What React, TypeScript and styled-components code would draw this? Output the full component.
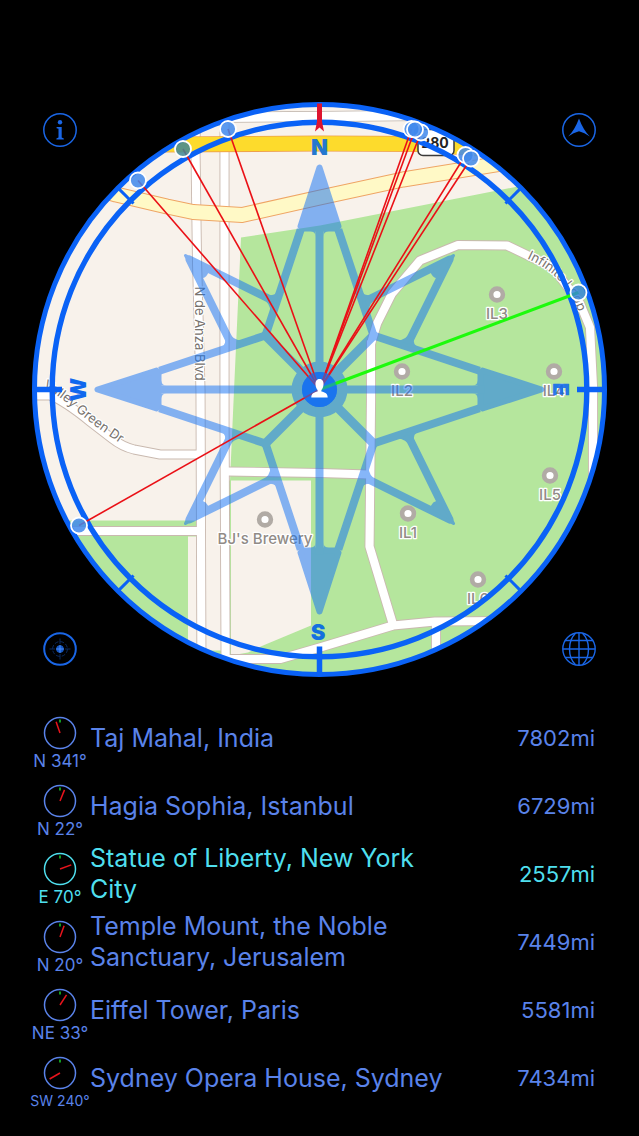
import React from "react";
import styled, { createGlobalStyle } from "styled-components";

const RING = "#0a62f6";
const ICON = "#1a66e6";

const GlobalStyle = createGlobalStyle`
  body {
    margin: 0;
    background: #000;
    font-family: Inter, "Liberation Sans", sans-serif;
  }
`;

const Page = styled.main`
  display: flex;
  flex-direction: column;
  gap: 27px;
  min-height: 100vh;
  box-sizing: border-box;
  padding: 102px 32px 16px;
  background: #000;
`;

const DialArea = styled.section`
  display: grid;
  grid-template-columns: 1fr 1fr;
  grid-template-rows: 1fr 1fr;
`;

const Dial = styled.svg`
  grid-area: 1 / 1 / 3 / 3;
  display: block;
  width: 100%;
  height: auto;
`;

const CornerButton = styled.button<{ $row: number; $col: number }>`
  grid-area: ${(p) => p.$row} / ${(p) => p.$col};
  justify-self: ${(p) => (p.$col === 1 ? "start" : "end")};
  align-self: ${(p) => (p.$row === 1 ? "start" : "end")};
  z-index: 1;
  width: 34px;
  height: 34px;
  margin: 11px;
  padding: 0;
  border: 0;
  background: none;
  color: ${ICON};
  cursor: pointer;

  svg {
    display: block;
  }
`;

const List = styled.ul`
  margin: 0;
  padding: 0;
  list-style: none;
`;

const RowButton = styled.button<{ $active?: boolean }>`
  display: grid;
  grid-template-columns: 56px minmax(0, 1fr) 136px;
  column-gap: 2px;
  align-items: center;
  width: 100%;
  height: 68px;
  padding: 0 12px 0 0;
  border: 0;
  background: none;
  color: ${(p) => (p.$active ? "#4fdfee" : "#5a83ea")};
  font-family: inherit;
  text-align: left;
  cursor: pointer;
`;

const Bearing = styled.span`
  display: flex;
  flex-direction: column;
  align-items: center;
  padding: 11px 3px 0 0;
  margin-right: -3px;
`;

const BearingText = styled.span<{ $small?: boolean }>`
  font-size: ${(p) => (p.$small ? 14 : 17)}px;
  line-height: 22px;
  white-space: nowrap;
`;

const Name = styled.span`
  font-size: 25px;
  line-height: 31px;
`;

const Distance = styled.span`
  font-size: 22px;
  line-height: 31px;
  text-align: right;
`;

type Place = { name: string; dir: string; deg: number; miles: number; active?: boolean };

const places: Place[] = [
  { name: "Taj Mahal, India", dir: "N", deg: 341, miles: 7802 },
  { name: "Hagia Sophia, Istanbul", dir: "N", deg: 22, miles: 6729 },
  { name: "Statue of Liberty, New York City", dir: "E", deg: 70, miles: 2557, active: true },
  { name: "Temple Mount, the Noble Sanctuary, Jerusalem", dir: "N", deg: 20, miles: 7449 },
  { name: "Eiffel Tower, Paris", dir: "NE", deg: 33, miles: 5581 },
  { name: "Sydney Opera House, Sydney", dir: "SW", deg: 240, miles: 7434 },
];

const MiniCompass = ({ deg }: { deg: number }) => (
  <svg width="34" height="34" viewBox="-17 -17 34 34" aria-hidden="true">
    <circle r="15.5" fill="none" stroke="currentColor" strokeWidth="1.5" />
    <path d="M0 -13.5V-10.5" stroke="#16c426" strokeWidth="1.6" />
    <path d="M0 0V-12" stroke="#e8141c" strokeWidth="1.5" transform={`rotate(${deg})`} />
  </svg>
);

const InfoIcon = () => (
  <svg width="34" height="34" viewBox="0 0 34 34" aria-hidden="true">
    <circle cx="17" cy="17" r="16.2" fill="none" stroke="currentColor" strokeWidth="1.5" />
    <circle cx="17" cy="9.3" r="2.2" fill="currentColor" />
    <path d="M13.6 14H18.7V24.6L20.8 25.4V26.6H13.4V25.4L15.5 24.6V15.8L13.6 15.2Z" fill="currentColor" />
  </svg>
);

const NorthIcon = () => (
  <svg width="34" height="34" viewBox="0 0 34 34" aria-hidden="true">
    <circle cx="17" cy="17" r="16.2" fill="none" stroke="currentColor" strokeWidth="1.5" />
    <path d="M17 5.5Q21 16.5 27.8 23.6Q22.5 19.4 17 18.2Q11.5 19.4 6.2 23.6Q13 16.5 17 5.5Z" fill="currentColor" />
  </svg>
);

const TargetIcon = () => (
  <svg width="34" height="34" viewBox="0 0 34 34" aria-hidden="true">
    <circle cx="17" cy="17" r="15.8" fill="none" stroke="currentColor" strokeWidth="2" />
    <g fill="none" stroke="currentColor" opacity="0.4">
      <circle cx="17" cy="17" r="7.4" strokeDasharray="4 1.8" />
      <path d="M17 6.5V12M17 22V27.5M6.5 17H12M22 17H27.5" />
    </g>
    <circle cx="17" cy="17" r="3.8" fill="currentColor" opacity="0.85" />
    <path d="M17 13V21M13 17H21" stroke="#4a8df8" strokeWidth="1" />
  </svg>
);

const GlobeIcon = () => (
  <svg width="34" height="34" viewBox="0 0 34 34" fill="none" stroke="currentColor" strokeWidth="1.4" aria-hidden="true">
    <circle cx="17" cy="17" r="16.2" />
    <path d="M17 1V33M1 17H33M3.3 8.5H30.7M3.3 25.5H30.7" />
    <path d="M13.5 1.2C5.5 9 5.5 25 13.5 32.8M20.5 1.2C28.5 9 28.5 25 20.5 32.8" />
  </svg>
);

const roads = [
  "M196 100L195.5 150L197 260L200.5 390L201.5 680",
  "M224.5 100V420L225.7 680",
  "M371 343L377 323L392 293L420 260L458 244.5L507 245L553 267L580 303L590 327L593 387V480",
  "M371 340V400L369.5 546L393 624",
  "M222 658.5H280L320 647L393 625L435 621L500 620.5",
  "M436 621V660",
  "M228 471L320 472.5L369 474",
  "M60 530.5H200",
  "M30 395H50Q64 400 90 421L112 438Q122 446 134 449L160 454H199",
];

const pins = [
  { x: 497, y: 294, label: "IL3" },
  { x: 402, y: 371, label: "IL2" },
  { x: 554, y: 371, label: "IL4" },
  { x: 550, y: 475, label: "IL5" },
  { x: 408, y: 513, label: "IL1" },
  { x: 478, y: 579, label: "IL6" },
  { x: 265, y: 519, label: "BJ's Brewery" },
];

const targets = [
  { x: 228, y: 128.5 },
  { x: 183, y: 148.5, fill: "#3f8795" },
  { x: 138, y: 180 },
  { x: 79, y: 525 },
  { x: 421, y: 132 },
  { x: 411.5, y: 128.5 },
  { x: 415, y: 129 },
  { x: 465.5, y: 154.5 },
  { x: 471, y: 158 },
];

const halo = { stroke: "#fff", strokeWidth: 2.5, strokeLinejoin: "round" as const, paintOrder: "stroke" };

const MapLayer = () => (
  <g clipPath="url(#dial-clip)">
    <rect x="30" y="100" width="580" height="580" fill="#f8f2eb" />
    <g fill="#b5e69d">
      <path d="M241 237L320 225L513 187L620 165V680H222V480H230L234 390Z" />
      <path d="M60 520H197V536H188V680H60Z" />
      <path d="M206 650H221V680H206Z" />
    </g>
    <path d="M231 480H311V625L263 645L248 652L231 655Z" fill="#f8f2eb" />
    <rect x="206" y="240" width="15" height="408" fill="#f8f2eb" />

    <g fill="none" strokeLinejoin="round">
      <path d="M190 117L320 116L420 115" stroke="#bdb2a9" strokeWidth="11" />
      <path d="M190 117L320 116L420 115" stroke="#fff" strokeWidth="9.4" />
      {roads.map((d) => (
        <path key={d} d={d} stroke="#c9b9af" strokeWidth="10" />
      ))}
      {roads.map((d) => (
        <path key={d} d={d} stroke="#fff" strokeWidth="8.2" />
      ))}
      <path d="M90 186L116 194L167 206L193 211.5L242 214.5L320 197L403 179L520 160" stroke="#efa565" strokeWidth="16" />
      <path d="M90 186L116 194L167 206L193 211.5L242 214.5L320 197L403 179L520 160" stroke="#fff9c6" strokeWidth="14" />
      <path d="M160 144L320 143L420 143.5L480 148" stroke="#eda04c" strokeWidth="16" />
      <path d="M160 144L320 143L420 143.5L480 148" stroke="#fddb2c" strokeWidth="14.4" />
    </g>

    <rect x="418" y="129" width="36" height="26" rx="5" fill="#fff" stroke="#3a3a3a" strokeWidth="1.5" />
    <text x="435" y="147" textAnchor="middle" fontSize="14" fontWeight="700" fill="#222">280</text>

    <g fontSize="13" fill="#77726d" {...halo}>
      <text transform="translate(195 286) rotate(90)">N de Anza Blvd</text>
      <path id="valley-path" d="M43 387Q58 394 72 407Q96 428 136 453" fill="none" stroke="none" />
      <text><textPath href="#valley-path">Valley Green Dr</textPath></text>
      <path id="loop-path" d="M527 258Q562 274 575 303L588 337" fill="none" stroke="none" />
      <text><textPath href="#loop-path">Infinite Loop</textPath></text>
    </g>
    {pins.map((p) => (
      <circle key={p.label} cx={p.x} cy={p.y} r="5.9" fill="#fff" stroke="#b1aba5" strokeWidth="4.6" />
    ))}
  </g>
);

const PinLabels = () => (
  <g clipPath="url(#inner-clip)" fontSize="15" fontWeight="500" fill="#918b86" textAnchor="middle" {...halo}>
    {pins.map((p) => (
      <text key={p.label} x={p.x} y={p.y + 24}>{p.label}</text>
    ))}
  </g>
);

const Rose = () => (
  <g transform="translate(319.5 389)" opacity="0.5" fill="#0f70f5" stroke="#0f70f5">
    <circle r="28" stroke="none" />
    {[0, 90, 180, 270].map((a) => (
      <g key={a} transform={`rotate(${a})`}>
        <path d="M0 -222L-19 -163L-17 -161H17L19 -163Z" strokeWidth="6" strokeLinejoin="round" />
        <path d="M-18.8 -160L-54 -54M18.8 -160L54 -54" fill="none" strokeWidth="8" />
        <path d="M0 0V-165" fill="none" strokeWidth="8" />
        <path d="M-4 -159V-153Q-4 -158 -9 -158ZM4 -159V-153Q4 -158 9 -158Z" stroke="none" />
        <path d="M0 0L-54 -54" fill="none" strokeWidth="9" strokeLinecap="round" />
        <path d="M-45 -88L-130 -130L-88 -45" fill="none" strokeWidth="8" strokeLinejoin="round" />
        <path d="M-134 -134L-112 -122Q-112 -112 -122 -112Z" strokeWidth="3" strokeLinejoin="round" />
        <path
          d="M-49 -77Q-49 -87 -58 -91L-45 -92ZM-77 -49Q-87 -49 -91 -58L-92 -45ZM-41 -101Q-44 -92 -53 -95L-43 -86ZM-101 -41Q-92 -44 -95 -53L-86 -43Z"
          stroke="none"
        />
      </g>
    ))}
  </g>
);

const CompassDial = () => (
  <Dial viewBox="32 101.5 575 575" role="img" aria-label="Compass map">
    <defs>
      <clipPath id="dial-clip"><circle cx="319.5" cy="389" r="286" /></clipPath>
      <clipPath id="inner-clip"><circle cx="319.5" cy="389" r="266" /></clipPath>
    </defs>
    <MapLayer />
    <PinLabels />
    <Rose />
    <g fontSize="22" fontWeight="900" textAnchor="middle">
      <text x="319.5" y="154" fill="#2477cf">N</text>
      <text x="318" y="639" fill="#1370e0">S</text>
      <text x="78" y="389" dy="8" fill="#1068ee" transform="rotate(-90 78 389)">W</text>
      <text x="560.5" y="389" dy="8" fill="#1068ee" fillOpacity="0.9" transform="rotate(90 560.5 389)">E</text>
    </g>

    <g fill="none" stroke={RING}>
      <circle cx="319.5" cy="389" r="285" strokeWidth="5" />
      <circle cx="319.5" cy="389" r="267.3" strokeWidth="5.4" />
      <path d="M34 389H62M577 389H606M319.5 646V675" strokeWidth="5.5" />
      {[45, 135, 225, 315].map((a) => (
        <path key={a} d="M319.5 105V126" strokeWidth="3" transform={`rotate(${a} 319.5 389)`} />
      ))}
    </g>
    <path d="M317 103H322V121L324 131L319.5 127L315 131L317 121Z" fill="#dd1430" />

    <circle cx="319.5" cy="389" r="17.5" fill="#1a74ee" />
    <g stroke="#ea1016" strokeWidth="1.6">
      {targets.map((t) => (
        <line key={`${t.x}`} x1="319.5" y1="389" x2={t.x} y2={t.y} />
      ))}
    </g>
    <line x1="319.5" y1="389" x2="578.5" y2="292" stroke="#1dfa0c" strokeWidth="3" />
    <circle cx="319.5" cy="389" r="17.5" fill="#1a74ee" opacity="0.6" />
    <path d="M319.5 378.5C316.5 378.5 315.2 381 315.5 384C315.7 387 316.8 388.5 317.6 389.5V391C314 391.8 311.3 393 311.3 397H327.7C327.7 393 325 391.8 321.4 391V389.5C322.2 388.5 323.3 387 323.5 384C323.8 381 322.5 378.5 319.5 378.5Z" fill="#fff" />

    {[...targets, { x: 578.5, y: 292, fill: "#3585d6" }].map((t) => (
      <circle key={`${t.x}`} cx={t.x} cy={t.y} r="8" fill={t.fill ?? "#4088ec"} fillOpacity="0.85" stroke="#fff" strokeWidth="1.8" />
    ))}
  </Dial>
);

export default function App() {
  return (
    <>
      <GlobalStyle />
      <Page>
        <DialArea>
          <CompassDial />
          <CornerButton $row={1} $col={1} aria-label="Info"><InfoIcon /></CornerButton>
          <CornerButton $row={1} $col={2} aria-label="Heading"><NorthIcon /></CornerButton>
          <CornerButton $row={2} $col={1} aria-label="Locate"><TargetIcon /></CornerButton>
          <CornerButton $row={2} $col={2} aria-label="Globe"><GlobeIcon /></CornerButton>
        </DialArea>
        <List>
          {places.map((p) => (
            <li key={p.name}>
              <RowButton $active={p.active}>
                <Bearing>
                  <MiniCompass deg={p.deg} />
                  <BearingText $small={p.dir === "SW"}>{`${p.dir} ${p.deg}°`}</BearingText>
                </Bearing>
                <Name>{p.name}</Name>
                <Distance>{`${p.miles}mi`}</Distance>
              </RowButton>
            </li>
          ))}
        </List>
      </Page>
    </>
  );
}
